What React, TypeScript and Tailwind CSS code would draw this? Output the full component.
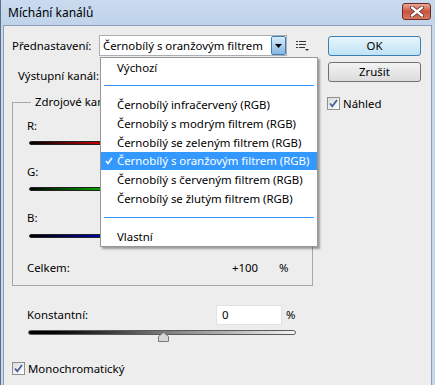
import React from "react";

const font = { fontFamily: '"Noto Sans", "DejaVu Sans", sans-serif' };

function CheckBox() {
  return (
    <div className="relative w-[13px] h-[13px] border border-[#8e8f8f] bg-gradient-to-br from-[#dcdcdc] to-[#ffffff] shrink-0">
      <svg width="11" height="11" viewBox="0 0 11 11" className="absolute left-0 top-0">
        <path d="M2 5.5 L4.3 8.3 L9 2" fill="none" stroke="#4a5f97" strokeWidth="1.8" />
      </svg>
    </div>
  );
}

function ColorSlider({ color }: { color: string }) {
  return (
    <div
      className="ml-[16px] w-[268px] h-[4px] rounded-full border border-[#222]"
      style={{ background: `linear-gradient(to right, #000 0%, ${color} 28%, ${color} 100%)` }}
    />
  );
}

const items: { t: string; sel?: boolean }[] = [
  { t: "Černobílý infračervený (RGB)" },
  { t: "Černobílý s modrým filtrem (RGB)" },
  { t: "Černobílý se zeleným filtrem (RGB)" },
  { t: "Černobílý s oranžovým filtrem (RGB)", sel: true },
  { t: "Černobílý s červeným filtrem (RGB)" },
  { t: "Černobílý se žlutým filtrem (RGB)" },
];

export default function App() {
  return (
    <div
      className="relative w-[435px] h-[385px] overflow-hidden bg-[#c4d7ec] border-l border-[#5d6f86] flex flex-col text-[11.4px] text-black"
      style={font}
    >
      {/* title bar */}
      <div className="h-[25px] flex items-start justify-between pl-[7px] pr-[4px] bg-gradient-to-b from-[#c9dbee] to-[#bfd3ea]">
        <div className="mt-[5px] leading-[16px] text-[12px]">Míchání kanálů</div>
        <div className="mt-[3px] w-[29px] h-[17px] rounded-[3px] border border-[#6e2a22] bg-gradient-to-b from-[#e9a99b] via-[#c9533f] to-[#d57a62] flex items-center justify-center">
          <svg width="14" height="11" viewBox="0 0 14 11">
            <path d="M2 1.5 L12 9.5 M12 1.5 L2 9.5" stroke="#5b2f2a" strokeWidth="4" strokeLinecap="round" />
            <path d="M2 1.5 L12 9.5 M12 1.5 L2 9.5" stroke="#ffffff" strokeWidth="2.4" strokeLinecap="round" />
          </svg>
        </div>
      </div>

      {/* client area */}
      <div className="flex-1 mr-[3px] ml-[2px] border-t border-l border-r border-[#8a9db4] bg-[#ededed] flex pt-[9px] pl-[8px]">
        {/* left column */}
        <div className="w-[300px] flex flex-col">
          <div className="h-[21px] flex items-center">
            <div className="w-[87px]">Přednastavení:</div>
            <div className="w-[188px] h-[21px] border border-[#abadb3] bg-white flex items-center">
              <div className="flex-1 pl-[3px] whitespace-nowrap">Černobílý s oranžovým filtrem</div>
              <div className="w-[15px] h-[19px] rounded-[2px] border border-[#3c7fb1] bg-gradient-to-b from-[#d8ecf9] to-[#84b6e0] flex items-center justify-center shrink-0">
                <svg width="7" height="4" viewBox="0 0 7 4"><path d="M0 0 L7 0 L3.5 4 Z" fill="#000" /></svg>
              </div>
            </div>
            <div className="ml-[9px] mt-[1px]">
              <svg width="14" height="12" viewBox="0 0 14 12">
                <rect x="0" y="1" width="2" height="1" fill="#333" />
                <rect x="3" y="1" width="7" height="1" fill="#333" />
                <rect x="0" y="4" width="2" height="1" fill="#333" />
                <rect x="3" y="4" width="7" height="1" fill="#333" />
                <rect x="0" y="7" width="2" height="1" fill="#333" />
                <rect x="3" y="7" width="6" height="1" fill="#333" />
                <path d="M9 9 L13 9 L11 11 Z" fill="#333" />
              </svg>
            </div>
          </div>

          <div className="mt-[10px] h-[19px] flex items-center pl-[6px]">Výstupní kanál:</div>

          {/* group box */}
          <div className="relative mt-[17px] w-[301px] border border-[#a8a8a8] pt-[15px] pb-[9px]">
            <div className="absolute left-[18px] -top-[9px] px-[4px] bg-[#ededed] leading-[16px]">Zdrojové kanály</div>
            <div className="h-[16px] leading-[16px] pl-[14px]">R:</div>
            <div className="mt-[7px]"><ColorSlider color="#d00000" /></div>
            <div className="mt-[19px] h-[16px] leading-[16px] pl-[14px]">G:</div>
            <div className="mt-[7px]"><ColorSlider color="#00b000" /></div>
            <div className="mt-[19px] h-[16px] leading-[16px] pl-[14px]">B:</div>
            <div className="mt-[8px]"><ColorSlider color="#0000b8" /></div>
            <div className="mt-[22px] h-[16px] leading-[16px] pl-[14px] flex">
              <div className="w-[205px]">Celkem:</div>
              <div className="w-[47px]">+100</div>
              <div>%</div>
            </div>
          </div>

          <div className="mt-[19px] h-[20px] flex items-center pl-[15px]">
            <div className="w-[189px]">Konstantní:</div>
            <div className="w-[66px] h-[20px] border border-[#e2e2e2] bg-white pl-[5px] leading-[18px]">0</div>
            <div className="ml-[4px]">%</div>
          </div>
          <div className="relative mt-[5px] ml-[16px] w-[268px] h-[5px] rounded-full border border-[#5a5a5a] bg-gradient-to-r from-[#000000] via-[#7a7a7a] to-[#f4f4f4]">
            <svg width="11" height="10" viewBox="0 0 11 10" className="absolute left-[129px] top-[1px]">
              <path d="M0.5 9.5 L0.5 4.5 L5.5 0.5 L10.5 4.5 L10.5 9.5 Z" fill="#d8d8d8" stroke="#7a7a7a" />
            </svg>
          </div>

          <div className="mt-[27px] h-[13px] flex items-center gap-[3px]">
            <CheckBox />
            <div className="leading-[13px]">Monochromatický</div>
          </div>
        </div>

        {/* right column */}
        <div className="ml-[16px] w-[93px] flex flex-col">
          <div className="mt-[1px] h-[20px] rounded-[3px] border border-[#3c7fb1] bg-gradient-to-b from-[#e8f5fc] to-[#bfe2f6] flex items-center justify-center">OK</div>
          <div className="mt-[6px] h-[20px] rounded-[3px] border border-[#707070] bg-gradient-to-b from-[#f3f3f3] to-[#dcdcdc] flex items-center justify-center">Zrušit</div>
          <div className="mt-[15px] h-[13px] flex items-center gap-[3px] -ml-[1px]">
            <CheckBox />
            <div className="leading-[13px]">Náhled</div>
          </div>
        </div>
      </div>

      {/* dropdown menu */}
      <div className="absolute left-[99px] top-[57px] w-[218px] h-[190px] border border-[#979797] bg-white shadow-[2px_2px_2px_rgba(0,0,0,0.35)] flex flex-col">
        <div className="h-[19px] flex items-center pl-[16px]">Výchozí</div>
        <div className="h-[18px] flex items-center px-[3px]"><div className="w-full h-px bg-[#3399ff]" /></div>
        {items.map((it) => (
          <div
            key={it.t}
            className={`h-[19px] flex items-center pl-[16px] relative whitespace-nowrap ${it.sel ? "bg-[#3399ff] text-white" : ""}`}
          >
            {it.sel && (
              <svg width="8" height="8" viewBox="0 0 8 8" className="absolute left-[4px] top-[5px]">
                <path d="M1 4 L3 6.5 L7 1" fill="none" stroke="#fff" strokeWidth="1.6" />
              </svg>
            )}
            {it.t}
          </div>
        ))}
        <div className="h-[19px] flex items-center px-[3px]"><div className="w-full h-px bg-[#3399ff]" /></div>
        <div className="h-[19px] flex items-center pl-[16px]">Vlastní</div>
      </div>
    </div>
  );
}
